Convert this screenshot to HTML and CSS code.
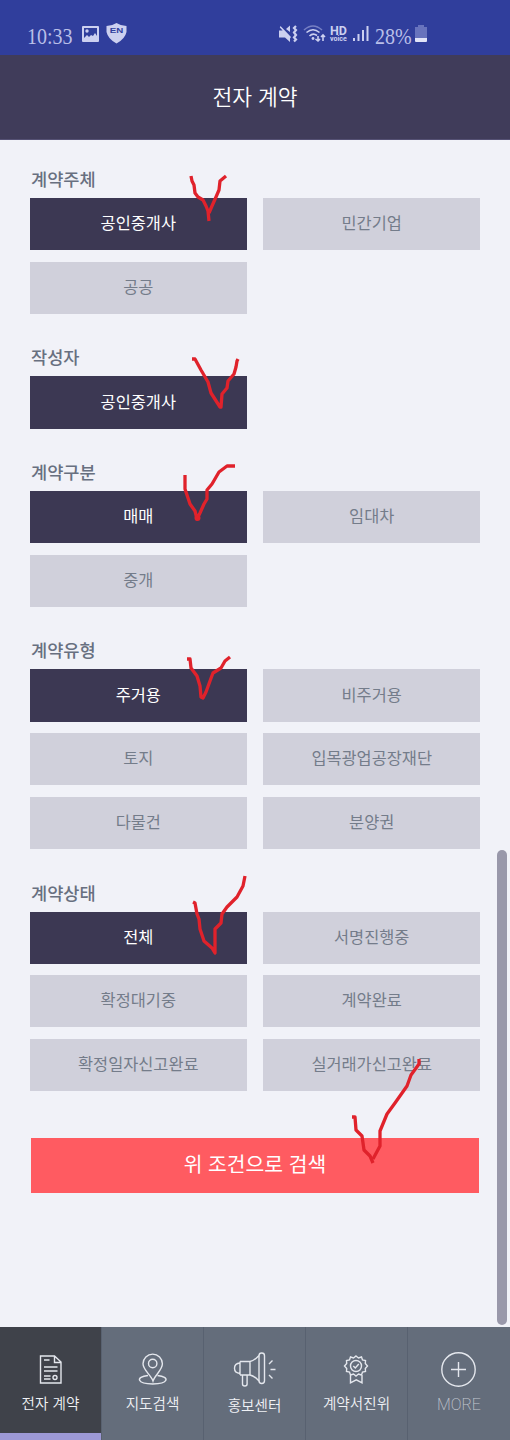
FILE: index.html
```html
<!DOCTYPE html>
<html lang="ko">
<head>
<meta charset="utf-8">
<title>전자 계약</title>
<link rel="stylesheet" href="styles.css">
</head>
<body>
<div class="screen">
  <div class="status">
    <span class="clock">10:33</span>
    <svg class="ic-photo" width="17" height="17" viewBox="0 0 17 17"><path fill="#ccd0f0" fill-rule="evenodd" d="M1 0h15q1 0 1 1v14q0 1-1 1H1q-1 0-1-1V1q0-1 1-1zM2 2v10l3-3 2 2 2-2 2 1 2-3 2 3V2z"/><circle cx="5" cy="5" r="1.700" fill="#ccd0f0"/></svg>
    <svg class="ic-shield" width="21" height="21" viewBox="0 0 21 21"><path fill="#ccd0f0" d="M10.500 0Q15 3 20.500 3V9Q19 16 10.500 20.500Q2 16 .5 9V3Q6 3 10.500 0z"/><text x="3.700" y="10" textLength="13.500" lengthAdjust="spacingAndGlyphs">EN</text></svg>
    <span class="gap"></span>
    <svg class="ic-mute" width="19" height="18" viewBox="0 0 19 18"><path fill="#ccd0f0" d="M0 5.500h4l7 7V17l-5-4.500H0zM7 4l4-3.500V7zM1.500 1L12 12l-1 1.500L.8 2.500z"/><path d="M17 1l-2 2 2 2-2 2.500 2 2.500-2 2.500 2 2-2 2" fill="none" stroke="#ccd0f0" stroke-width="2.200"/></svg>
    <svg class="ic-wifi" width="23" height="18" viewBox="0 0 23 18"><g fill="none" stroke-width="1.600"><path stroke="#7780c4" d="M1 5Q10-3 19 5"/><path stroke="#ccd0f0" d="M3.500 7.500Q10 2 16.500 7.500M6.500 11Q10 7.500 14 10.500M15 11v5M12.500 14l2.500 2 2-2M20 16v-6M18 12l2-2 2 2"/></g><circle cx="10" cy="13.500" r="1.400" fill="#ccd0f0"/></svg>
    <span class="hd"><b>HD</b><small>voice</small></span>
    <svg class="ic-signal" width="16" height="17" viewBox="0 0 16 17"><path fill="#ccd0f0" d="M0 13h2v3H0zM4.500 9h2v7h-2zM9 5h2v11H9zM13.500 1h2v15h-2z"/></svg>
    <span class="pct">28%</span>
    <svg class="ic-batt" width="12" height="17" viewBox="0 0 12 17"><path fill="#6873bd" d="M3 0h6v2h3v11H0V2h3z"/><path fill="#e2e4f8" d="M0 13h12v3q0 1-1 1H1q-1 0-1-1z"/></svg>
  </div>
  <header class="header">전자 계약</header>
  <main class="main">
    <section class="group"><h2>계약주체</h2><div class="options">
      <button class="opt on">공인중개사</button><button class="opt">민간기업</button><button class="opt">공공</button></div></section>
    <section class="group"><h2>작성자</h2><div class="options">
      <button class="opt on">공인중개사</button></div></section>
    <section class="group"><h2>계약구분</h2><div class="options">
      <button class="opt on">매매</button><button class="opt">임대차</button><button class="opt">중개</button></div></section>
    <section class="group"><h2>계약유형</h2><div class="options">
      <button class="opt on">주거용</button><button class="opt">비주거용</button><button class="opt">토지</button><button class="opt">입목광업공장재단</button><button class="opt">다물건</button><button class="opt">분양권</button></div></section>
    <section class="group"><h2>계약상태</h2><div class="options">
      <button class="opt on">전체</button><button class="opt">서명진행중</button><button class="opt">확정대기중</button><button class="opt">계약완료</button><button class="opt">확정일자신고완료</button><button class="opt">실거래가신고완료</button></div></section>
    <button class="search">위 조건으로 검색</button>
  </main>
  <nav class="tabs">
    <a class="tab active"><svg width="40" height="40" viewBox="0 0 40 40"><path d="M9.500 8h14l6.500 6v21H9.500zM23.500 8v6.500h6M13 12h5.500M13 19h13.500M13 23h13.500M13 28h6.500M13 31h6.500"/><circle cx="24" cy="29.500" r="2"/></svg><span>전자 계약</span></a>
    <a class="tab"><svg width="40" height="40" viewBox="0 0 40 40"><path d="M20 33C18 27 10 22 10 15.800a9.700 9.700 0 0 1 19.400 0C29.400 22 22 27 20 33z"/><circle cx="19.700" cy="15.500" r="4.200"/><path d="M15 27.500C2 29 4 36 19.700 36S37.500 29 24.500 27.500"/></svg><span>지도검색</span></a>
    <a class="tab low"><svg width="44" height="40" viewBox="0 0 44 40"><path d="M7 13.500h10c5-1 7-4 9-6M7 27h10c5 1 7 4 9 6M7 13.500V27M17 13.500V27M7 15Q1.500 15.500 1.500 20.300T7 25.500M9.500 27v9q0 2 2.300 2t2.300-2v-9"/><rect x="26" y="5" width="5.500" height="30.500" rx="2.700"/><path d="M36 16l3.500-3.500M37.500 21.500h5M36 27l3.500 3.500"/></svg><span>홍보센터</span></a>
    <a class="tab"><svg width="40" height="40" viewBox="0 0 40 40"><path d="M19 8L21.500 10L24.500 9L25.500 12L28.500 12.500L28.300 15.500L30.500 18L28.300 20.500L28.500 23.500L25.500 24L24.500 27L21.500 26L19 28L16.500 26L13.500 27L12.500 24L9.500 23.500L9.700 20.500L7.500 18L9.700 15.500L9.500 12.500L12.500 12L13.500 9L16.500 10ZM13.500 27v7.800l5.800-3 5.700 3V27"/><circle cx="19" cy="18" r="5.500"/><path d="M16.300 18l2 2 3.500-4"/></svg><span>계약서진위</span></a>
    <a class="tab low more"><svg width="40" height="40" viewBox="0 0 40 40"><circle cx="19.500" cy="21.500" r="16.700"/><path d="M19.500 14v15M12 21.500h15"/></svg><span>MORE</span></a>
  </nav>
  <div class="scrollbar"></div>
  <svg class="marks" width="510" height="1440" viewBox="0 0 510 1440">
    <path d="M191 176L192 181L194 185L195 193L198 197L203 200L206 206L208 211L209 221M209 213L212 206L216 197L219 190L220 181L226 176"/>
    <path d="M192 359H195L201 370L208 382L211 393L220 407L221 407L222 394L227 388L228 381L234 374L236 367L237 361L238 359"/>
    <path d="M185 475V489L188 498L190 504L195 511L197 519L200 513L204 504L207 499V490L212 484L219 472L227 466H235"/>
    <path d="M187 659H190L191 668L197 676L200 686L201 697L203 698L206 692L210 681L213 673L221 668L225 661L230 657"/>
    <path d="M193 902L195 903L197 914L199 919L200 929L204 941L212 948L215 953V929L221 923L222 914L227 907L237 897L243 886L245 876"/>
    <path d="M352 1117H355L356 1130L362 1136L364 1150L370 1156L373 1163M373 1159L380 1146V1131L387 1114L395 1103L407 1086L411 1075L419 1064V1059"/>
    <circle cx="197.500" cy="518" r="3"/>
  </svg>
</div>
</body>
</html>
```
FILE: styles.css
```css
* { box-sizing: border-box; }
body { margin: 0; font-family: "Noto Sans CJK KR", sans-serif; }
button { border: 0; padding: 0; font-family: inherit; }
.screen { position: relative; width: 510px; height: 1440px; display: flex; flex-direction: column; background: #f1f2f8; overflow: hidden; }
.status { height: 55px; background: #303e9c; display: flex; align-items: flex-start; padding: 25px 83px 0 27px; color: #ccd0f0; }
.clock, .pct { font: 20px/22px "Liberation Serif", serif; white-space: nowrap; color: #b9bfe8; transform: scaleY(1.12); }
.clock { width: 55px; }
.ic-photo { margin-top: 1px; }
.ic-shield { margin: -2px 0 0 7px; }
.ic-shield text { font: bold 6.500px "Liberation Sans", sans-serif; fill: #303e9c; }
.gap { flex: 1; }
.ic-wifi { margin-left: 5px; }
.hd { width: 18px; margin-left: 4px; display: flex; flex-direction: column; font-family: Roboto, sans-serif; }
.hd b { font-size: 12.500px; line-height: 11px; }
.hd small { font-size: 7px; line-height: 7px; font-weight: 700; }
.ic-signal { margin-left: 5px; }
.pct { width: 37px; margin: 0 3px 0 6px; }
.header { height: 85px; background: #403c5a; border-bottom: 1px solid #555174; color: #fff; font-size: 21.500px; line-height: 81px; text-align: center; font-weight: 350; }
.main { flex: 1; padding: 22px 30px 0; }
.group { margin-bottom: 26.400px; }
.group h2 { margin: 0; padding-left: 1px; height: 36px; line-height: 33px; font-size: 17.600px; font-weight: 500; color: #687080; }
.options { display: grid; grid-template-columns: 216.600px 216.600px; justify-content: space-between; gap: 11.400px 0; }
.opt { height: 52.300px; padding-bottom: 3px; background: #d0d0db; color: #747c8a; font-size: 16.400px; line-height: 49px; }
.opt.on { background: #3c3853; color: #fff; }
.search { display: block; width: 448px; height: 55px; padding-bottom: 3px; margin: 46.500px auto 0; background: #ff5b61; color: #fff; font-size: 20.400px; line-height: 51px; }
.tabs { height: 113px; display: grid; grid-template-columns: 101px 102px 102px 102px 103px; background: #646d7b; }
.tab { display: flex; flex-direction: column; align-items: center; padding-top: 21px; border-left: 1px solid #586170; color: #f0f2f6; font-size: 14.600px; line-height: 22px; font-weight: 350; }
.tab svg { fill: none; stroke: #e4e7ed; stroke-width: 1.400; }
.tab span { margin-top: 4px; }
.tab.low span { margin-top: 6px; }
.tab.active { background: #3f424a; border-left: 0; border-bottom: 7px solid #9d99d6; }
.tab.more { color: #c2c7d0; font-size: 16px; }
.more span { font-family: Roboto, sans-serif; font-weight: 200; }
.scrollbar { position: absolute; left: 497px; top: 850px; width: 10px; height: 475px; border-radius: 5px; background: #9998aa; }
.marks { position: absolute; left: 0; top: 0; pointer-events: none; fill: none; stroke: #e0222b; stroke-width: 3.300; stroke-linejoin: round; }
.marks circle { fill: #e0222b; stroke: none; }
```
